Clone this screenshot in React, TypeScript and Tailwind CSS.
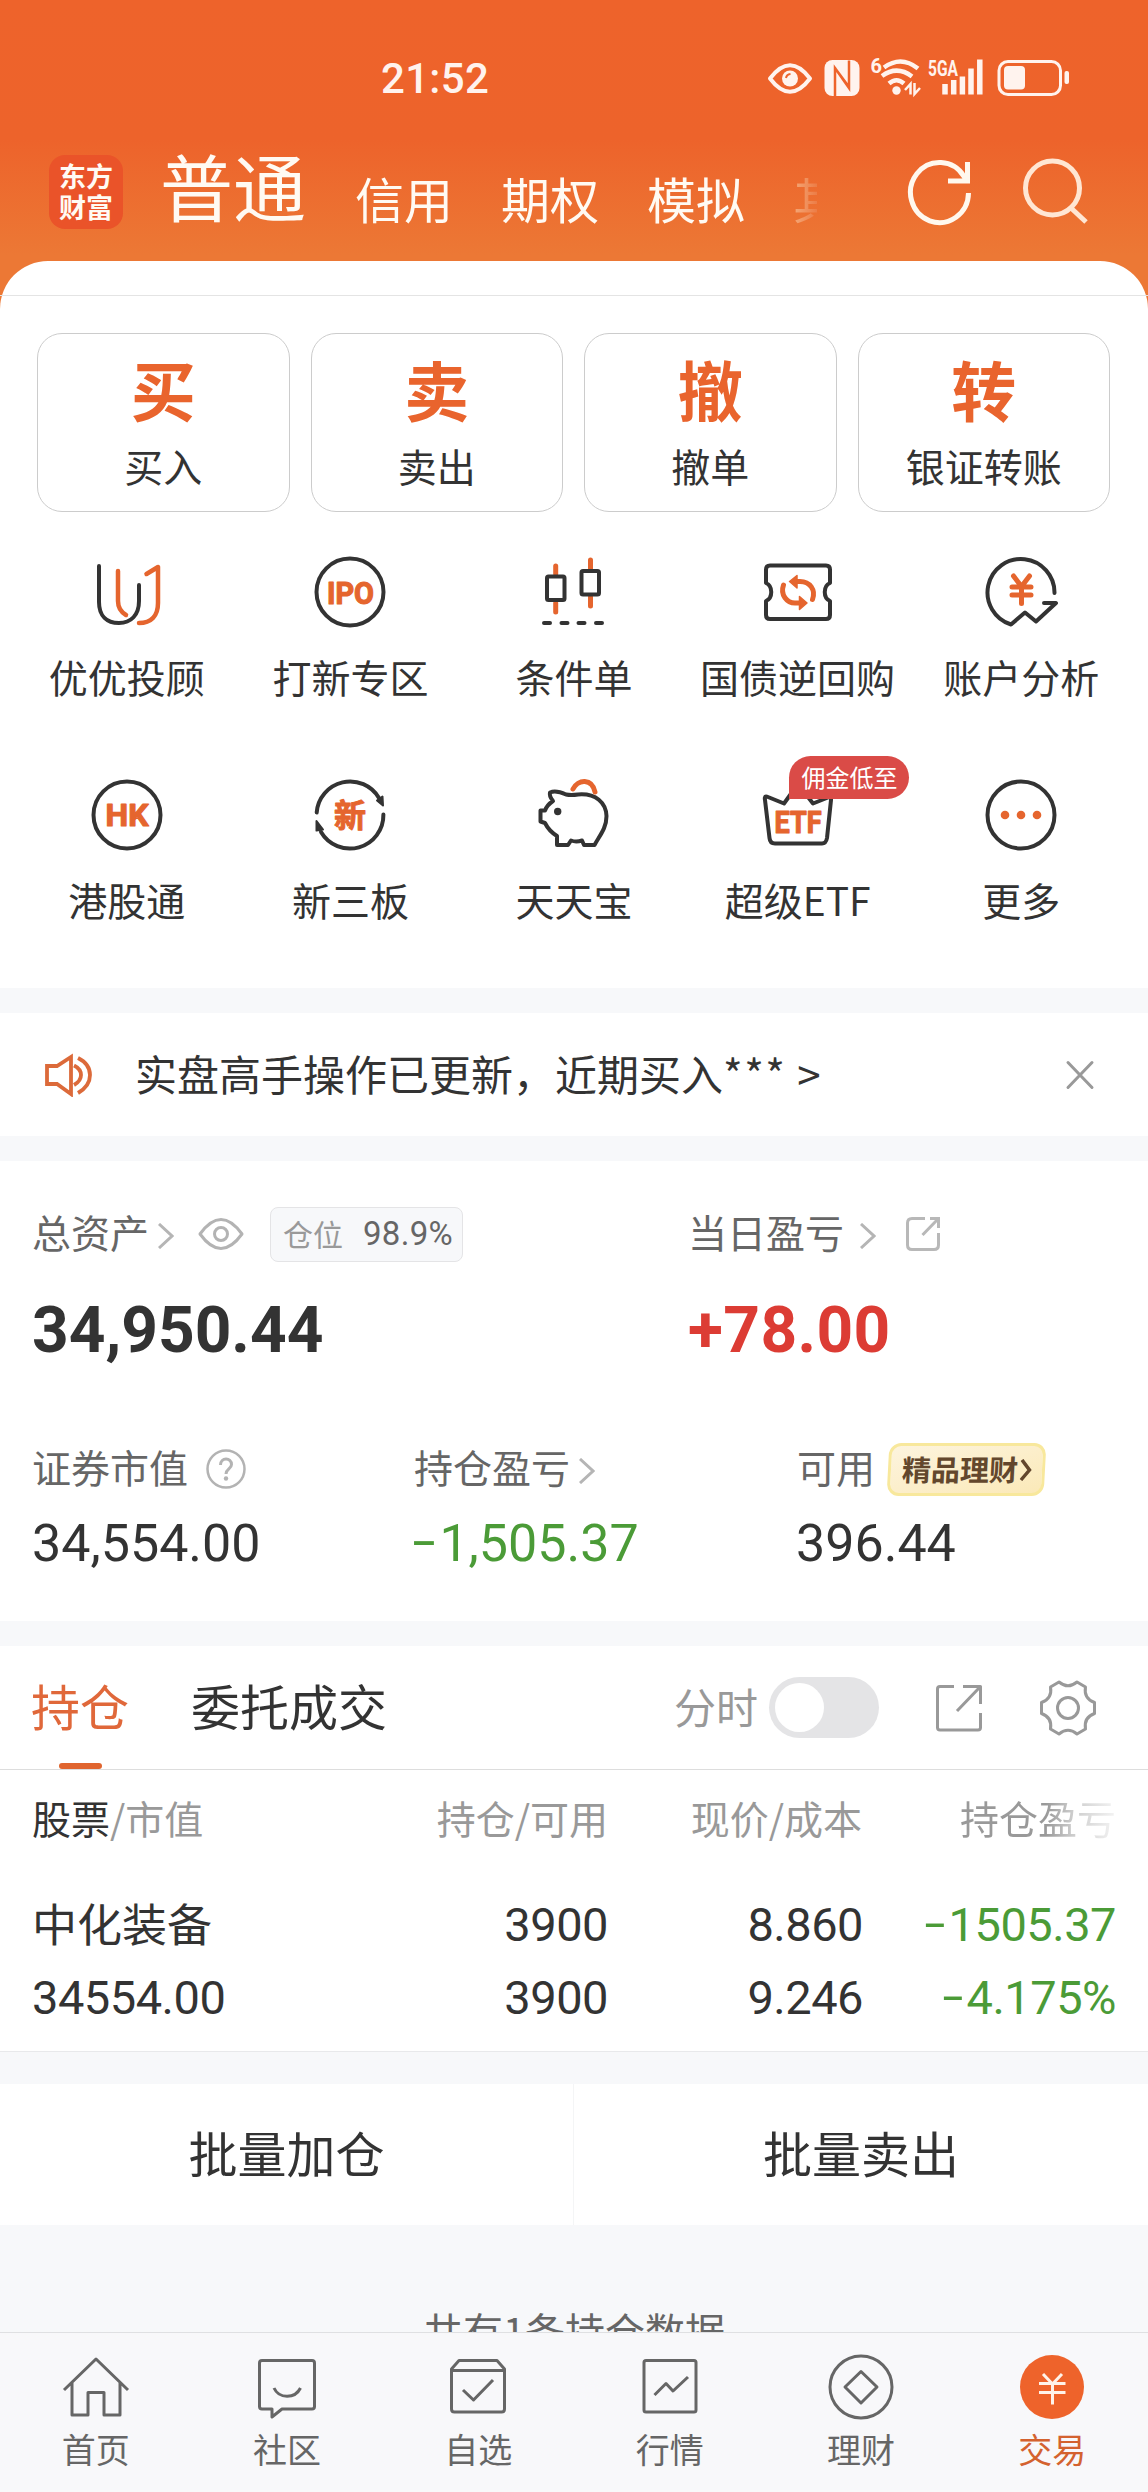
import type { ReactNode } from "react";

const ORANGE = "#e5652e";
const DARK = "#333333";

const quickActions = [
  { glyph: "买", label: "买入" },
  { glyph: "卖", label: "卖出" },
  { glyph: "撤", label: "撤单" },
  { glyph: "转", label: "银证转账" },
];

function ServiceSvg({ children }: { children: ReactNode }) {
  return (
    <svg
      viewBox="0 0 80 80"
      className="block h-20 w-20"
      fill="none"
      stroke={DARK}
      strokeWidth={4}
      strokeLinecap="round"
      strokeLinejoin="round"
    >
      {children}
    </svg>
  );
}

function IconWord({ x, y, width, children }: { x: number; y: number; width: number; children: string }) {
  return (
    <text
      x={x}
      y={y}
      textLength={width}
      lengthAdjust="spacingAndGlyphs"
      fill={ORANGE}
      stroke={ORANGE}
      strokeWidth={1.2}
      className="font-['Roboto',sans-serif] text-[32px] font-bold"
    >
      {children}
    </text>
  );
}

const services: { label: string; badge?: string; icon: ReactNode }[] = [
  {
    label: "优优投顾",
    icon: (
      <ServiceSvg>
        <path d="M12 14V50C12 64 20 71 32 71S52 63 52 49V33" />
        <path d="M31 19V49C31 55 34 60 39 63M59.500 22L71 15V51C71 64 64 71 52 71" stroke={ORANGE} strokeWidth={4.500} />
      </ServiceSvg>
    ),
  },
  {
    label: "打新专区",
    icon: (
      <ServiceSvg>
        <circle cx="40" cy="40" r="33.5" />
        <IconWord x={17} y={51.500} width={47}>IPO</IconWord>
      </ServiceSvg>
    ),
  },
  {
    label: "条件单",
    icon: (
      <ServiceSvg>
        <path d="M21.700 14V22M21.700 51V60M56.500 8V17M56.500 45V54" stroke={ORANGE} strokeWidth={5} />
        <rect x="13" y="24.500" width="17.500" height="23.500" rx="1.500" />
        <rect x="47.500" y="19" width="17.500" height="23.500" rx="1.500" />
        <path d="M10 71H16M27.500 71H33.500M44.500 71H50.500M62 71H68" />
      </ServiceSvg>
    ),
  },
  {
    label: "国债逆回购",
    icon: (
      <ServiceSvg>
        <path d="M12 13.500H68Q72 13.500 72 17.500V31C65 34 65 46 72 49V63Q72 67 68 67H12Q8 67 8 63V49C15 46 15 34 8 31V17.500Q8 13.500 12 13.500Z" />
        <path d="M38 29.500H42C52 29.500 58 38 54.500 47.500M25.500 33C22 43 29 51 37 51H42" stroke={ORANGE} strokeWidth={5} />
        <path d="M31.500 29.500L39 23.500V36ZM49 51L41.500 44.500V57.500Z" fill={ORANGE} stroke={ORANGE} strokeWidth={1.500} />
      </ServiceSvg>
    ),
  },
  {
    label: "账户分析",
    icon: (
      <ServiceSvg>
        <path d="M73.500 41A33.500 33.500 0 1 0 30 72.500L44 60.500L55 69.500L75 51H63" />
        <path d="M32.500 24L40.500 34.500L48.500 24M40.500 35V51.500M31 35H50M31 43H50" stroke={ORANGE} strokeWidth={5} />
      </ServiceSvg>
    ),
  },
  {
    label: "港股通",
    icon: (
      <ServiceSvg>
        <circle cx="40" cy="40" r="33.5" />
        <IconWord x={18.500} y={51} width={43}>HK</IconWord>
      </ServiceSvg>
    ),
  },
  {
    label: "新三板",
    icon: (
      <ServiceSvg>
        <path d="M6.700 37.500A33.500 33.500 0 0 1 69 23M73.400 39.500A33.500 33.500 0 0 1 11 57" />
        <path d="M73 30.500L67 25.500L72.500 21.500ZM6.500 46L13 54.500L6.500 55.500Z" fill={DARK} strokeWidth={2} />
        <text
          x="40"
          y="51.500"
          textAnchor="middle"
          fill={ORANGE}
          stroke={ORANGE}
          strokeWidth={1}
          className="font-['Noto_Sans_CJK_SC',sans-serif] text-[32px] font-bold"
        >
          新
        </text>
      </ServiceSvg>
    ),
  },
  {
    label: "天天宝",
    icon: (
      <ServiceSvg>
        <path
          d="M6.500 35.500H11Q13 30 19 26Q15 21 16 17.500Q22 15 32 19.500Q37 20.500 44 19.500C62 18 72 28 72.500 41C72.500 53 66 60 60.500 70H50L48 65.500Q42 67.500 37 65.500L34 70H23V61Q15 56 11 48L6.500 46.500Z"
        />
        <circle cx="23.700" cy="36.500" r="3.700" fill={DARK} stroke="none" />
        <path d="M39 14C44 4 58 3 61 17" stroke={ORANGE} strokeWidth={5} />
      </ServiceSvg>
    ),
  },
  {
    label: "超级ETF",
    badge: "佣金低至",
    icon: (
      <ServiceSvg>
        <path d="M7 25Q6 20 10 22L26 28.500L40 9L55 28.500L70 22.500Q74 21 73 25L69 63Q68 68.500 64 68.500H17Q12 68.500 11.500 63Z" />
        <IconWord x={16.500} y={57.500} width={47}>ETF</IconWord>
      </ServiceSvg>
    ),
  },
  {
    label: "更多",
    icon: (
      <ServiceSvg>
        <circle cx="40" cy="40" r="33.500" />
        <g fill={ORANGE} stroke="none">
          <circle cx="24" cy="40" r="4.300" />
          <circle cx="40" cy="40" r="4.300" />
          <circle cx="56" cy="40" r="4.300" />
        </g>
      </ServiceSvg>
    ),
  },
];

const navItems: { label: string; active?: boolean; icon: ReactNode }[] = [
  {
    label: "首页",
    icon: <path d="M4 39L36 8L68 39M12 32V64H28V41.500H44V64H60V32" />,
  },
  {
    label: "社区",
    icon: (
      <path d="M11 9.500H61Q63.500 9.500 63.500 12V55.500Q63.500 58 61 58H31L21 66V58H11Q8.500 58 8.500 55.500V12Q8.500 9.500 11 9.500ZM23 37C28 48 44 48 49.500 37" />
    ),
  },
  {
    label: "自选",
    icon: (
      <path d="M9.500 18L17 9.500H55L62.500 18V58Q62.500 61 59.500 61H12.500Q9.500 61 9.500 58ZM10 19.500H62M21 39L31.500 49L51 29" />
    ),
  },
  {
    label: "行情",
    icon: (
      <>
        <rect x="10" y="9.500" width="52" height="51.500" rx="2" />
        <path d="M20.500 44L32 32.500L39 40L54 26" />
      </>
    ),
  },
  {
    label: "理财",
    icon: (
      <>
        <circle cx="36" cy="36" r="31" />
        <path d="M36 20.500L52 36L36 52L20 36Z" />
      </>
    ),
  },
  {
    label: "交易",
    active: true,
    icon: (
      <>
        <circle cx="36" cy="36" r="32" fill="#ee632b" stroke="none" />
        <path d="M27 23L36.500 33L46 23M36.500 33V53.500M23 32.500H49.500M23 41.500H49.500" stroke="#fff3ea" />
      </>
    ),
  },
];

function Chevron() {
  return (
    <svg viewBox="0 0 16 26" className="h-[26px] w-4 shrink-0" fill="none" stroke="#b5b5b5" strokeWidth={3}>
      <path d="M1 1L14 13L1 25" />
    </svg>
  );
}

function StatusIcons() {
  return (
    <svg viewBox="0 0 306 44" className="h-11 w-[306px]" fill="none" stroke="#fff3ee">
      {/* eye comfort */}
      <path d="M4 23.500Q24 -3 44 23.500Q24 50 4 23.500Z" strokeWidth={4} strokeLinejoin="round" />
      <circle cx="24" cy="23.500" r="8" fill="#fff3ee" stroke="none" />
      <path d="M20 23Q20.500 19.500 24.500 19" stroke="#ee632b" strokeWidth={2} />
      {/* nfc */}
      <rect x="58.500" y="5" width="35" height="36" rx="8" fill="#fff3ee" stroke="none" />
      <path d="M69 41V13L83 32V23M83 5.500V33L69 13" stroke="#ee632b" strokeWidth={2.500} />
      {/* wifi */}
      <text x="104.500" y="18" fill="#fff3ee" stroke="none" className="font-['Roboto',sans-serif] text-[20px] font-bold">
        6
      </text>
      <path d="M118 12.500Q135 0 152 13.500M116 21Q131 10 146 21.500M123 28.500Q130.500 22 138 28.500" strokeWidth={4.500} />
      <circle cx="130.500" cy="35.500" r="4.200" fill="#fff3ee" stroke="none" />
      <path d="M139 35L144.500 29V39.500M148.500 28V39L154 33" strokeWidth={2.500} />
      {/* mobile signal */}
      <text
        x="162"
        y="20.500"
        textLength="30"
        lengthAdjust="spacingAndGlyphs"
        fill="#fff3ee"
        stroke="none"
        className="font-['Roboto',sans-serif] text-[22px] font-bold"
      >
        5GA
      </text>
      <path d="M179 29V39.500M187.700 25V39.500M196.400 21.500V39.500M205 13.500V39.500M213.800 4.500V39.500" strokeWidth={5.500} />
      {/* battery */}
      <rect x="233" y="6.500" width="61.500" height="33" rx="9" strokeWidth={3} />
      <rect x="238" y="11" width="21" height="23.500" rx="4" fill="#fff3ee" stroke="none" />
      <rect x="298.500" y="16" width="4.500" height="13" rx="2" fill="#fff3ee" stroke="none" />
    </svg>
  );
}

function Minus() {
  return <span className="mr-1 inline-block origin-right -translate-y-[2px] scale-x-[1.6]">-</span>;
}

const num = "font-['Roboto',sans-serif]";

export default function App() {
  return (
    <div className="flex h-[2492px] w-[1148px] flex-col overflow-hidden bg-[#f7f8fa] font-['Noto_Sans_CJK_SC',sans-serif] text-[#333333]">
      <div className="bg-[linear-gradient(180deg,#ee632b_0px,#ed632b_140px,#ec7835_255px,#ec7835_100%)]">
        {/* Status bar */}
        <div className="flex h-[155px] items-start pr-[76px] pl-[381px]">
          <span className={`${num} mt-[58px] text-[42px] leading-[42px] font-medium tracking-[0.3px] text-[#fff3ee]`}>21:52</span>
          <div className="mt-[55px] ml-auto">
            <StatusIcons />
          </div>
        </div>

        {/* Account tabs */}
        <div className="flex h-[106px] items-start pl-[49px] text-[#fffaf3]">
          <div className="flex h-[74px] w-[74px] flex-col items-center justify-center rounded-2xl bg-[#ea5329] pb-[3px] text-[27px] leading-[31px] font-bold">
            <span>东方</span>
            <span>财富</span>
          </div>
          <span className="-mt-[8px] ml-[37px] w-[195px] text-[73px] leading-[74px]">普通</span>
          <span className="mt-[17px] w-[146px] text-[49px] leading-[52px]">信用</span>
          <span className="mt-[17px] w-[146px] text-[49px] leading-[52px]">期权</span>
          <span className="mt-[17px] w-[146px] text-[49px] leading-[52px]">模拟</span>
          <span className="mt-[17px] w-6 overflow-hidden bg-linear-to-r from-[#f4a878] to-[#ec7c45] bg-clip-text text-[49px] leading-[52px] text-transparent">
            其
          </span>
          <svg viewBox="0 0 70 70" className="mt-[2px] ml-[87px] h-[70px] w-[70px]" fill="none" stroke="#fff8ee" strokeWidth={5}>
            <path d="M64.500 36A29 30 0 1 1 60 19.500L63 24M63.500 5V24H44" />
          </svg>
          <svg viewBox="0 0 70 70" className="mt-[2px] ml-[49px] h-[70px] w-[70px]" fill="none" stroke="#ffe6d3" strokeWidth={5}>
            <circle cx="29.500" cy="31" r="27" />
            <path d="M48 51L63 65" />
          </svg>
        </div>

        {/* Quick actions and services */}
        <div className="h-[727px] rounded-t-[48px] bg-white pt-[34px]">
          <div className="border-t border-[#e4e4e4] pt-[37px] pr-[38px] pl-[37px]">
            <div className="grid grid-cols-4 gap-[21px]">
              {quickActions.map((action) => (
                <div key={action.label} className="flex h-[179px] flex-col items-center rounded-[25px] border border-[#cccccc]">
                  <span className="mt-[18px] text-[65px] leading-[72px] font-bold text-[#e9642d]">{action.glyph}</span>
                  <span className="mt-[19px] text-[39px] leading-[44px]">{action.label}</span>
                </div>
              ))}
            </div>
          </div>
          <div className="grid grid-cols-5 px-[15px] pt-[40px]">
            {services.map((service) => (
              <div key={service.label} className="flex h-[223px] flex-col items-center">
                <div className="relative">
                  {service.icon}
                  {service.badge && (
                    <span className="absolute -top-[19px] left-[31px] h-[43px] w-[120px] rounded-[22px] rounded-bl-none bg-[#da4b47] pl-[2px] text-center text-[24px] leading-[41px] text-white">
                      {service.badge}
                    </span>
                  )}
                </div>
                <span className="mt-[22px] text-[39px] leading-[44px] whitespace-nowrap">{service.label}</span>
              </div>
            ))}
          </div>
        </div>
      </div>

      {/* Notice */}
      <div className="mt-[25px] flex h-[123px] shrink-0 items-center bg-white pr-[53px] pl-[44px]">
        <svg viewBox="0 0 50 44" className="h-11 w-[50px]" fill="none" stroke="#dc6a3a" strokeWidth={3.8}>
          <path d="M3 13H13L27 4V41L13 31H3ZM30 12.500Q37 16 37 22T30 32M34 5Q46 11 46 22T34 40" />
        </svg>
        <span className="ml-[41px] pb-[4px] text-[42px] leading-[48px]">
          实盘高手操作已更新，近期买入<span className="tracking-[1.5px]">*** &gt;</span>
        </span>
        <svg viewBox="0 0 30 30" className="ml-auto h-[30px] w-[30px]" stroke="#999999" strokeWidth={3} strokeLinecap="round">
          <path d="M3 2.500L27 27.500M27 2.500L3 27.500" />
        </svg>
      </div>

      {/* Assets */}
      <div className="mt-[25px] h-[460px] shrink-0 bg-white pt-[44px] text-[39px] text-[#666666]">
        <div className="flex h-[58px] pl-[32px]">
          <div className="flex w-[656px] items-center">
            <span className="pb-[5px]">总资产</span>
            <div className="mt-1 ml-[9px] flex">
              <Chevron />
            </div>
            <svg viewBox="0 0 46 34" className="ml-[24px] h-[34px] w-[46px]" fill="none" stroke="#b3b3b3" strokeWidth={3}>
              <path d="M2 17Q23 -12 44 17Q23 46 2 17Z" strokeLinejoin="round" />
              <circle cx="23" cy="17" r="6.500" />
            </svg>
            <div className="ml-[26px] flex h-[55px] w-[193px] items-center rounded-lg border border-[#e4e4e6] bg-[#f7f8fa] pl-[12px]">
              <span className="pb-[3px] text-[30px] leading-[50px] text-[#999999]">仓位</span>
              <span className={`${num} ml-[20px] text-[33px] leading-[50px] tracking-[0.3px]`}>98.9%</span>
            </div>
          </div>
          <div className="flex items-center">
            <span className="pb-[5px]">当日盈亏</span>
            <div className="mt-1 ml-[16px] flex">
              <Chevron />
            </div>
            <svg viewBox="0 0 36 36" className="ml-[29px] h-9 w-9" fill="none" stroke="#b8b8b8" strokeWidth={3}>
              <path d="M20 2.500H7Q2.500 2.500 2.500 7V29Q2.500 33.500 7 33.500H29Q33.500 33.500 33.500 29V17M25 2.500H33.500V12M33 3L17.500 19" />
            </svg>
          </div>
        </div>
        <div className={`${num} mt-[35px] flex pl-[32px] text-[64px] leading-[66px] font-bold`}>
          <span className="w-[656px] text-[#333333]">34,950.44</span>
          <span className="tracking-[0.4px] text-[#dc3c34]">+78.00</span>
        </div>
        <div className="mt-[77px] grid grid-cols-[382px_383px_1fr] pl-[32px]">
          <div className="flex h-[56px] items-center">
            <span className="pb-[5px]">证券市值</span>
            <svg viewBox="0 0 40 42" className="ml-[18px] h-[42px] w-10" fill="none" stroke="#b3b3b3" strokeWidth={2.5}>
              <circle cx="20" cy="21" r="18.500" />
              <path d="M14.500 17C14.500 9 25.500 9 25.500 16.500C25.500 21 20 21 20 26" strokeWidth={3} />
              <circle cx="20" cy="30.500" r="2.200" fill="#b3b3b3" stroke="none" />
            </svg>
          </div>
          <div className="flex h-[56px] items-center">
            <span className="pb-[5px]">持仓盈亏</span>
            <div className="mt-1 ml-[9px] flex">
              <Chevron />
            </div>
          </div>
          <div className="flex h-[56px] items-center">
            <span className="pb-[5px]">可用</span>
            <div className="ml-[13px] flex h-[53px] w-[157px] -skew-x-3 items-center rounded-xl border-[3px] border-[#f8e89c] bg-linear-to-br from-[#fdf4de] to-[#fbe9b8] pl-[11px]">
              <span className="pb-[3px] text-[29px] leading-[44px] font-bold text-[#63472d]">精品理财</span>
              <svg viewBox="0 0 12 22" className="ml-[2px] h-[22px] w-3" fill="none" stroke="#63472d" strokeWidth={3.5}>
                <path d="M1.500 1L9.500 11L1.500 21" />
              </svg>
            </div>
          </div>
        </div>
        <div className={`${num} mt-[18px] grid grid-cols-[381px_383px_1fr] pl-[32px] text-[52px] leading-[58px] text-[#333333]`}>
          <span>34,554.00</span>
          <span className="pl-[8px]">
            <span className="text-[#4b9b37]">
              <Minus />
              1,505.37
            </span>
          </span>
          <span>396.44</span>
        </div>
      </div>

      {/* Holdings */}
      <div className="mt-[25px] h-[406px] shrink-0 border-b border-[#e8e9eb] bg-white">
        <div className="flex h-[124px] items-center border-b border-[#dddddd] pr-[52px] pl-[31px]">
          <div className="relative flex h-full items-center">
            <span className="pb-[5px] text-[49px] leading-[54px] text-[#e0683a]">持仓</span>
            <span className="absolute bottom-0 left-[28px] h-[6px] w-[43px] rounded-full bg-[#e0652f]" />
          </div>
          <span className="ml-[62px] pb-[5px] text-[49px] leading-[54px]">委托成交</span>
          <span className="ml-auto pb-[4px] text-[42px] leading-[48px] text-[#999999]">分时</span>
          <div className="ml-[11px] flex h-[61px] w-[110px] items-center rounded-full bg-[#e4e4e6] pl-[6px]">
            <div className="h-[49px] w-[49px] rounded-full bg-white" />
          </div>
          <svg viewBox="0 0 48 48" className="ml-[56px] h-12 w-12" fill="none" stroke="#999999" strokeWidth={3}>
            <path d="M19 2.500H5Q2.500 2.500 2.500 5V43.500Q2.500 46 5 46H43Q45.500 46 45.500 43.500V29M28 2.500H45.500V20M45 3L22 27" strokeLinejoin="round" />
          </svg>
          <svg viewBox="0 0 56 56" className="ml-[57px] h-14 w-14" fill="none" stroke="#999999" strokeWidth={3} strokeLinejoin="round">
            <path d="M19 2Q28 9.500 37 2L45.500 7Q43.500 18.500 54.500 22.500V33.500Q43.500 37.500 45.500 49L37 54Q28 46.500 19 54L10.500 49Q12.500 37.500 1.500 33.500V22.500Q12.500 18.500 10.500 7Z" />
            <circle cx="28" cy="28" r="10.500" />
          </svg>
        </div>

        <div className="grid grid-cols-[576px_254px_254px] pt-[24px] pl-[32px] text-[39px] leading-[46px] text-[#999999]">
          <div className="flex justify-between">
            <span>
              <span className="text-[#333333]">股票</span>/市值
            </span>
            <span>持仓/可用</span>
          </div>
          <span className="text-right">现价/成本</span>
          <span className="justify-self-end bg-[linear-gradient(90deg,#999_55%,#ccc_72%,#f4f4f4_100%)] bg-clip-text text-transparent">
            持仓盈亏
          </span>
        </div>

        <div className={`${num} mt-[48px] grid grid-cols-[576px_255px_253px] pl-[32px] text-[47px] leading-[73px] tracking-[-0.5px]`}>
          <div className="flex justify-between">
            <span className="-mt-[2px] font-['Noto_Sans_CJK_SC',sans-serif] text-[45px] leading-[73px] tracking-normal">中化装备</span>
            <span>3900</span>
          </div>
          <span className="text-right">8.860</span>
          <span className="text-right text-[#4b9b37]">
            <Minus />
            1505.37
          </span>
          <div className="flex justify-between">
            <span>34554.00</span>
            <span>3900</span>
          </div>
          <span className="text-right">9.246</span>
          <span className="text-right text-[#4b9b37]">
            <Minus />
            4.175%
          </span>
        </div>
      </div>

      {/* Batch operations */}
      <div className="mt-[32px] grid h-[141px] shrink-0 grid-cols-2 bg-white text-[49px]">
        <div className="flex items-center justify-center border-r border-[#f4f5f6] pb-[6px]">批量加仓</div>
        <div className="flex items-center justify-center pb-[6px]">批量卖出</div>
      </div>
      <div className="h-[107px] shrink-0 overflow-hidden pt-[82px] text-center text-[40px] leading-[46px] text-[#666666]">
        共有1条持仓数据
      </div>

      {/* Bottom navigation */}
      <div className="grid h-[160px] shrink-0 grid-cols-6 border-t border-[#dfe0e2] bg-[#f8f8fa] pt-[18px]">
        {navItems.map((item) => (
          <div key={item.label} className="flex flex-col items-center">
            <svg
              viewBox="0 0 72 72"
              className="h-[72px] w-[72px]"
              fill="none"
              stroke="#666666"
              strokeWidth={3}
              strokeLinejoin="round"
            >
              {item.icon}
            </svg>
            <span className={item.active ? "mt-[7px] text-[34px] leading-[38px] text-[#d4622f]" : "mt-[7px] text-[34px] leading-[38px] text-[#666666]"}>
              {item.label}
            </span>
          </div>
        ))}
      </div>
    </div>
  );
}
